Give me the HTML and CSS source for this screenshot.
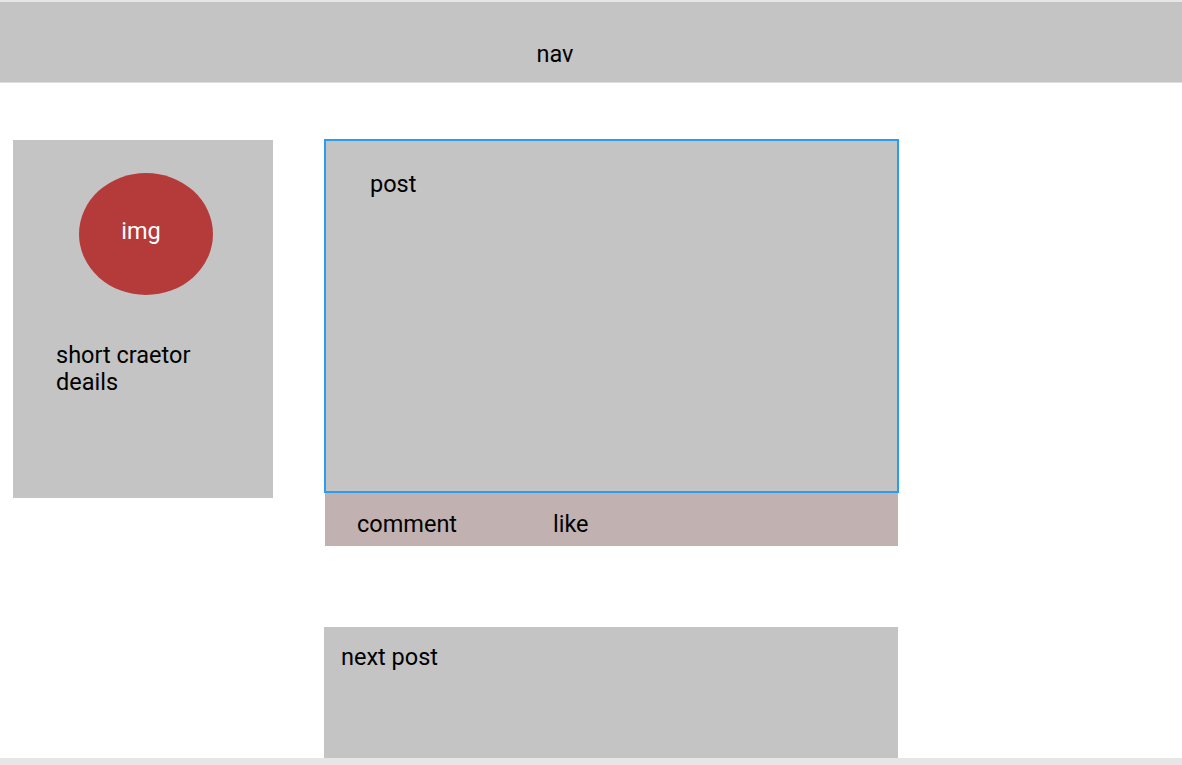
FILE: index.html
```html
<!DOCTYPE html>
<html>
<head>
<meta charset="utf-8">
<link rel="stylesheet" href="styles.css">
</head>
<body>
<div class="frame">
  <header class="nav">nav</header>
  <main class="main">
    <aside class="creator">
      <div class="avatar">img</div>
      <p class="details">short craetor<br>deails</p>
    </aside>
    <section class="feed">
      <article class="post">
        <div class="post-body">post</div>
      </article>
      <div class="actions">
        <span class="action comment">comment</span>
        <span class="action">like</span>
      </div>
      <article class="next">next post</article>
    </section>
  </main>
</div>
</body>
</html>
```
FILE: styles.css
```css
html, body {
  margin: 0;
  padding: 0;
}
body {
  background: #e6e6e6;
  font-family: Roboto, "Liberation Sans", sans-serif;
  font-size: 23.5px;
  color: #000;
  height: 765px;
  overflow: hidden;
  padding-top: 2px;
  box-sizing: border-box;
}
.frame {
  background: #fff;
  height: 756px;
  overflow: hidden;
}
.nav {
  background: #c4c4c4;
  height: 81px;
  display: flex;
  align-items: center;
  justify-content: center;
  padding: 24px 72px 0 0;
  box-sizing: border-box;
  border-bottom: 1px solid #dedede;
}
.main {
  display: flex;
  align-items: flex-start;
}
.creator {
  background: #c4c4c4;
  width: 260px;
  height: 358px;
  margin: 57px 0 0 13px;
  padding-top: 33px;
  box-sizing: border-box;
}
.avatar {
  width: 134px;
  height: 122px;
  border-radius: 50%;
  background: #b53b3b;
  color: #fff;
  margin-left: 66px;
  display: flex;
  align-items: center;
  justify-content: center;
  padding-right: 10px;
  padding-bottom: 6px;
  box-sizing: border-box;
}
.details {
  margin: 47px 0 0 43px;
  line-height: 27px;
}
.feed {
  width: 575px;
  margin: 56px 0 0 51px;
}
.post {
  height: 354px;
  border: 2px solid #2a9df2;
  background: #c4c4c4;
  box-sizing: border-box;
  padding: 29px 0 0 44px;
}
.actions {
  background: #c1b2b1;
  height: 53px;
  margin: 0 1px;
  display: flex;
  align-items: center;
  padding: 8px 0 0 32px;
  box-sizing: border-box;
}
.action.comment {
  width: 196px;
}
.next {
  background: #c4c4c4;
  height: 131px;
  margin-top: 81px;
  margin-right: 1px;
  padding: 16px 0 0 17px;
  box-sizing: border-box;
}
```
